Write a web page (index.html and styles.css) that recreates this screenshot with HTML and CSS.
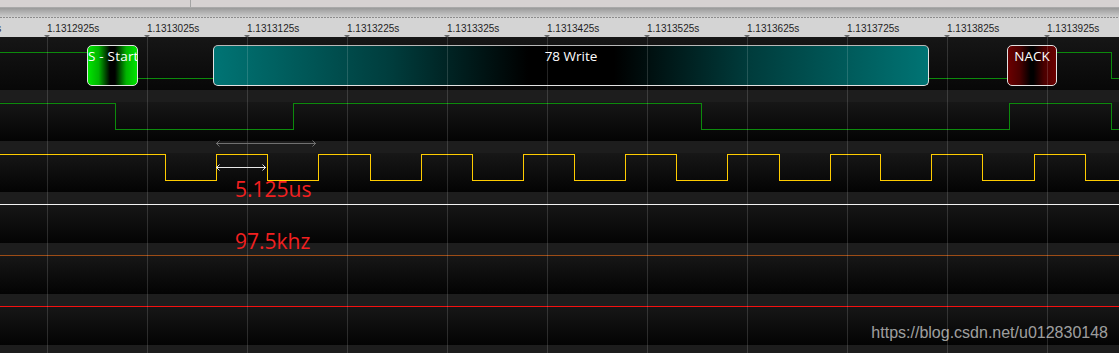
FILE: index.html
```html
<!DOCTYPE html>
<html lang="en">
  <head>
    <meta charset="UTF-8" />
    <meta name="viewport" content="width=device-width, initial-scale=1.0" />
    <title>I2C capture</title>
    <link rel="stylesheet" href="styles.css">
  </head>
  <body>
    <div class="screen">
      <div class="toolbar">
        <div class="tool-left"></div>
        <div class="tool-right"></div>
      </div>
      <div class="shade"></div>
      <div class="ruler">
        <span class="tick first">1.1312825s</span>
        <span class="tick">1.1312925s</span>
        <span class="tick">1.1313025s</span>
        <span class="tick">1.1313125s</span>
        <span class="tick">1.1313225s</span>
        <span class="tick">1.1313325s</span>
        <span class="tick">1.1313425s</span>
        <span class="tick">1.1313525s</span>
        <span class="tick">1.1313625s</span>
        <span class="tick">1.1313725s</span>
        <span class="tick">1.1313825s</span>
        <span class="tick">1.1313925s</span>
      </div>

      <div class="traces">
        <!-- decoded i2c frames -->
        <div class="row row-decode">
          <svg class="wave" width="1119" height="53" viewBox="0 0 1119 53">
            <path class="sig-green" d="M0 15.5 H110 V41.5 H1030 V15.5 H1111.5 V41.5 H1119" />
          </svg>
          <div class="frame start" style="left: 87px; width: 51px">S - Start</div>
          <div class="frame write" style="left: 213px; width: 716px">78 Write</div>
          <div class="frame nack" style="left: 1007px; width: 50px">NACK</div>
        </div>

        <!-- SDA -->
        <div class="row">
          <svg class="wave" width="1119" height="51" viewBox="0 0 1119 51">
            <path class="sig-green" d="M0 13.5 H115.5 V39.5 H293.5 V13.5 H701.5 V39.5 H1009.5 V13.5 H1111.5 V39.5 H1119" />
          </svg>
        </div>

        <!-- SCL -->
        <div class="row">
          <svg class="wave" width="1119" height="51" viewBox="0 0 1119 51">
            <path class="sig-yellow" d="M0 13.5 H165.5 V39.5 H216.5 V13.5 H267.5 V39.5 H318.5 V13.5 H370.5 V39.5 H421.5 V13.5 H472.5 V39.5 H523.5 V13.5 H574.5 V39.5 H625.5 V13.5 H676.5 V39.5 H727.5 V13.5 H779.5 V39.5 H830.5 V13.5 H880.5 V39.5 H931.5 V13.5 H982.5 V39.5 H1034.5 V13.5 H1085.5 V39.5 H1119" />
          </svg>
        </div>

        <div class="row">
          <svg class="wave" width="1119" height="51" viewBox="0 0 1119 51">
            <path class="sig-white" d="M0 12.5 H1119" />
          </svg>
        </div>

        <div class="row">
          <svg class="wave" width="1119" height="51" viewBox="0 0 1119 51">
            <path class="sig-orange" d="M0 12.5 H1119" />
          </svg>
        </div>

        <div class="row">
          <svg class="wave" width="1119" height="51" viewBox="0 0 1119 51">
            <path class="sig-red" d="M0 12.5 H1119" />
          </svg>
        </div>

        <div class="row row-last"></div>

        <div class="grid"></div>

        <!-- period measurement -->
        <svg class="measure" width="1119" height="316" viewBox="0 0 1119 316">
          <g class="arrow-gray">
            <path d="M216 106.5 H316" />
            <path d="M219.5 103.5 L216.5 106.5 L219.5 109.5" />
            <path d="M312.5 103.5 L315.5 106.5 L312.5 109.5" />
          </g>
          <g class="arrow-white">
            <path d="M216 130.5 H266" />
            <path d="M219.5 127.5 L216.5 130.5 L219.5 133.5" />
            <path d="M262.5 127.5 L265.5 130.5 L262.5 133.5" />
          </g>
        </svg>
        <div class="note note-period">5.125us</div>
        <div class="note note-freq">97.5khz</div>

        <div class="watermark">https://blog.csdn.net/u012830148</div>
      </div>
    </div>
  </body>
</html>
```

FILE: styles.css
```css
body {
  margin: 0;
  background: #000;
  font-family: "Open Sans", "DejaVu Sans", sans-serif;
  overflow: hidden;
}
.screen {
  width: 1119px;
  height: 353px;
  overflow: hidden;
}

/* top chrome */
.toolbar {
  display: flex;
  height: 8px;
  box-sizing: border-box;
  background: #d6d2d2;
  border-bottom: 1px solid #a9a9a9;
}
.tool-left {
  width: 191px;
  box-sizing: border-box;
  border-right: 1px solid #a4a4a4;
}
.tool-right {
  flex: 1;
}
.shade {
  height: 10px;
  background:
    repeating-linear-gradient(90deg, #8c8c8c 0 2px, #d2d2d2 2px 3px) bottom / 100% 1px no-repeat,
    linear-gradient(#9a9a9a, #d2d2d2);
}
.ruler {
  display: flex;
  height: 19px;
  box-sizing: border-box;
  padding-top: 5px;
  background: #d4d4d4;
  overflow: hidden;
  font-family: "Liberation Sans", Arial, sans-serif;
  font-size: 10px;
  line-height: 12px;
  color: #1e1e1e;
}
.tick {
  position: relative;
  flex: 0 0 100px;
  white-space: nowrap;
}
.tick::after {
  content: "";
  position: absolute;
  left: -3px;
  top: 12px;
  border-left: 3px solid transparent;
  border-right: 3px solid transparent;
  border-top: 3px solid #6a6a6a;
}
.tick.first {
  flex-basis: 98px;
  margin-left: -51px;
}
.tick.first::after {
  display: none;
}

/* channels */
.traces {
  position: relative;
  height: 316px;
}
.row {
  position: relative;
  height: 51px;
  background: linear-gradient(#1d1d1d 0 12px, #171717 12px, #030303);
}
.row-decode {
  height: 53px;
  background: linear-gradient(#161616, #070707);
}
.row-last {
  height: 8px;
}
.wave {
  display: block;
  fill: none;
  stroke-width: 1;
  shape-rendering: crispEdges;
}
.sig-green { stroke: #0c8a0c; }
.sig-yellow { stroke: #ffcc00; }
.sig-white { stroke: #f2f2f2; }
.sig-orange { stroke: #9c4c16; }
.sig-red { stroke: #f41010; }

.frame {
  position: absolute;
  top: 8px;
  height: 41px;
  box-sizing: border-box;
  padding-top: 1px;
  border: 1px solid #e2e2e2;
  border-radius: 5px;
  color: #fff;
  font-size: 13.5px;
  line-height: 18px;
  text-align: center;
  white-space: nowrap;
  overflow: hidden;
}
.frame.start {
  letter-spacing: 0.2px;
  background: linear-gradient(90deg, #00e400, #00b400 22%, #000 45%, #000 55%, #00b400 78%, #00e400);
}
.frame.write {
  border-top-color: #b8b8b8;
  background: linear-gradient(90deg, #007474, #003c3c 25%, #000 44%, #000 56%, #003c3c 75%, #007474);
}
.frame.nack {
  background: linear-gradient(90deg, #6c0000, #4a0000 25%, #000 47%, #000 53%, #4a0000 75%, #6c0000);
}

.grid {
  position: absolute;
  inset: 0;
  pointer-events: none;
  background: repeating-linear-gradient(90deg, transparent 0 47px, rgba(255, 255, 255, 0.14) 47px 48px, transparent 48px 100px);
}

.measure {
  position: absolute;
  left: 0;
  top: 0;
  fill: none;
  stroke-width: 1;
}
.arrow-gray { stroke: #707070; }
.arrow-white { stroke: #e8e8e8; }

.note {
  position: absolute;
  left: 235px;
  color: #f22020;
  font-size: 21px;
  line-height: 21px;
}
.note-period { top: 142px; }
.note-freq { top: 194px; }

.watermark {
  position: absolute;
  right: 11px;
  top: 288px;
  font-family: "Liberation Sans", Arial, sans-serif;
  font-size: 16px;
  line-height: 16px;
  color: rgba(255, 255, 255, 0.62);
}
```
